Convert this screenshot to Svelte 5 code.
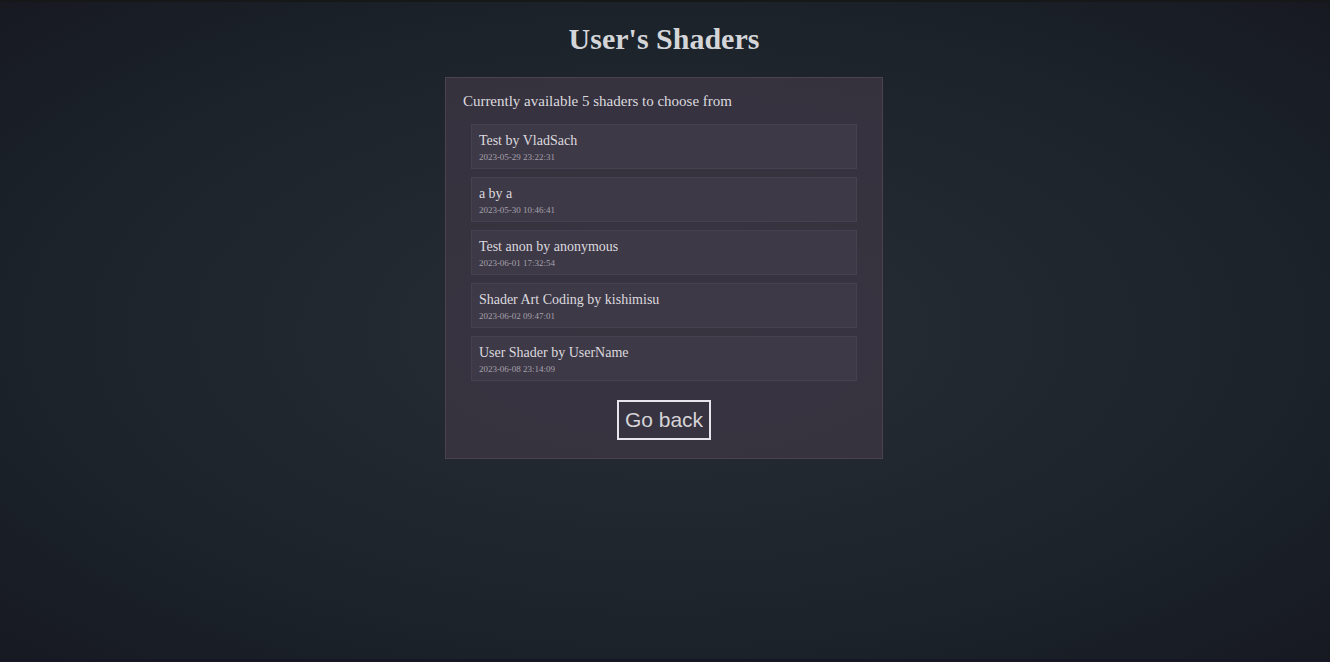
<script>
  const shaders = [
    { name: 'Test', author: 'VladSach', created: '2023-05-29 23:22:31' },
    { name: 'a', author: 'a', created: '2023-05-30 10:46:41' },
    { name: 'Test anon', author: 'anonymous', created: '2023-06-01 17:32:54' },
    { name: 'Shader Art Coding', author: 'kishimisu', created: '2023-06-02 09:47:01' },
    { name: 'User Shader', author: 'UserName', created: '2023-06-08 23:14:09' },
  ];
</script>

<main>
  <h1>User's Shaders</h1>
  <section class="panel">
    <p class="summary">Currently available {shaders.length} shaders to choose from</p>
    <ul>
      {#each shaders as shader}
        <li>
          <span class="name">{shader.name} by {shader.author}</span>
          <time>{shader.created}</time>
        </li>
      {/each}
    </ul>
    <button type="button">Go back</button>
  </section>
</main>

<style>
  :global(body) {
    margin: 0;
    background: #171921;
  }

  main {
    box-sizing: border-box;
    min-height: 100vh;
    padding: 19px 2px 19px 0;
    display: flex;
    flex-direction: column;
    align-items: center;
    border-top: 2px solid #151719;
    border-bottom: 3px solid #171624;
    background: radial-gradient(ellipse farthest-corner at center, #272e36 0%, #1b2229 70%, #171921 100%);
    color: #dcdadf;
    font-family: "Liberation Serif", "Times New Roman", serif;
  }

  h1 {
    margin: 0 0 20px;
    font-size: 30px;
    line-height: 36px;
    color: #d3d5d9;
  }

  .panel {
    box-sizing: border-box;
    width: 33%;
    min-width: 320px;
    padding: 15px 17px 18px;
    display: flex;
    flex-direction: column;
    border: 1px solid #4b414f;
    background: rgba(60, 54, 68, 0.8);
  }

  .summary {
    margin: 0 0 14px;
    font-size: 15px;
    line-height: 17px;
  }

  ul {
    margin: 0 8px 19px;
    padding: 0;
    display: flex;
    flex-direction: column;
    gap: 8px;
    list-style: none;
  }

  li {
    padding: 8px 7px 6px;
    display: flex;
    flex-direction: column;
    gap: 3px;
    border: 1px solid #464150;
    background: #3e3947;
  }

  .name {
    font-size: 14px;
    line-height: 16px;
  }

  time {
    font-size: 9px;
    line-height: 10px;
    color: #a5a1ab;
  }

  button {
    align-self: center;
    padding: 7px 6px;
    border: 2px solid #e6e4ec;
    background: transparent;
    color: #d5d4d7;
    font-family: "Liberation Sans", Arial, sans-serif;
    font-size: 21px;
    line-height: 22px;
    cursor: pointer;
  }
</style>
